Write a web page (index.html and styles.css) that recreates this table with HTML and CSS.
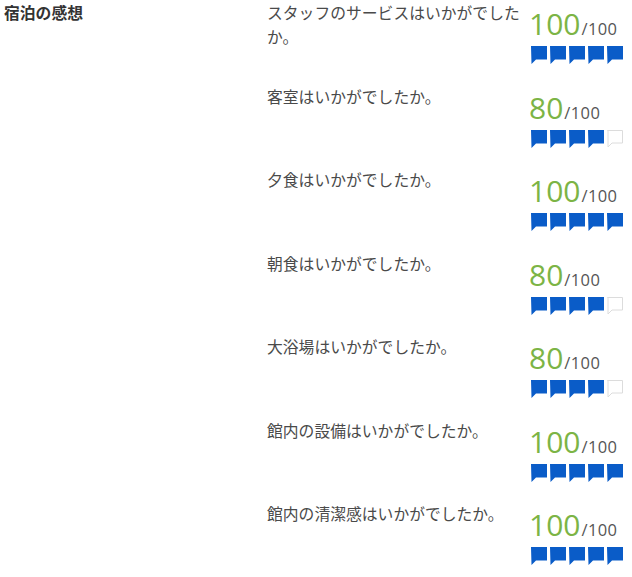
FILE: index.html
```html
<!DOCTYPE html>
<html lang="ja">
<head>
<meta charset="utf-8">
<link rel="stylesheet" href="styles.css">
</head>
<body>
<svg width="0" height="0" class="defs">
  <defs>
    <symbol id="bubble" viewBox="0 0 16 18">
      <path d="M0 0H16V13.5H5L0.5 18Z"/>
    </symbol>
    <symbol id="empty" viewBox="0 0 16 18">
      <path d="M0.5 0.5H15.5V13H5L1 17V0.5Z"/>
    </symbol>
  </defs>
</svg>
<section class="review">
  <h2 class="label">宿泊の感想</h2>
  <div class="rows">
    <div class="row">
      <p class="q">スタッフのサービスはいかがでしたか。</p>
      <div class="score">
        <div class="num"><span class="big">100</span><span class="max">/100</span></div>
        <div class="icons"><svg class="on"><use href="#bubble"/></svg><svg class="on"><use href="#bubble"/></svg><svg class="on"><use href="#bubble"/></svg><svg class="on"><use href="#bubble"/></svg><svg class="on"><use href="#bubble"/></svg></div>
      </div>
    </div>
    <div class="row">
      <p class="q">客室はいかがでしたか。</p>
      <div class="score">
        <div class="num"><span class="big">80</span><span class="max">/100</span></div>
        <div class="icons"><svg class="on"><use href="#bubble"/></svg><svg class="on"><use href="#bubble"/></svg><svg class="on"><use href="#bubble"/></svg><svg class="on"><use href="#bubble"/></svg><svg class="off"><use href="#empty"/></svg></div>
      </div>
    </div>
    <div class="row">
      <p class="q">夕食はいかがでしたか。</p>
      <div class="score">
        <div class="num"><span class="big">100</span><span class="max">/100</span></div>
        <div class="icons"><svg class="on"><use href="#bubble"/></svg><svg class="on"><use href="#bubble"/></svg><svg class="on"><use href="#bubble"/></svg><svg class="on"><use href="#bubble"/></svg><svg class="on"><use href="#bubble"/></svg></div>
      </div>
    </div>
    <div class="row">
      <p class="q">朝食はいかがでしたか。</p>
      <div class="score">
        <div class="num"><span class="big">80</span><span class="max">/100</span></div>
        <div class="icons"><svg class="on"><use href="#bubble"/></svg><svg class="on"><use href="#bubble"/></svg><svg class="on"><use href="#bubble"/></svg><svg class="on"><use href="#bubble"/></svg><svg class="off"><use href="#empty"/></svg></div>
      </div>
    </div>
    <div class="row">
      <p class="q">大浴場はいかがでしたか。</p>
      <div class="score">
        <div class="num"><span class="big">80</span><span class="max">/100</span></div>
        <div class="icons"><svg class="on"><use href="#bubble"/></svg><svg class="on"><use href="#bubble"/></svg><svg class="on"><use href="#bubble"/></svg><svg class="on"><use href="#bubble"/></svg><svg class="off"><use href="#empty"/></svg></div>
      </div>
    </div>
    <div class="row">
      <p class="q">館内の設備はいかがでしたか。</p>
      <div class="score">
        <div class="num"><span class="big">100</span><span class="max">/100</span></div>
        <div class="icons"><svg class="on"><use href="#bubble"/></svg><svg class="on"><use href="#bubble"/></svg><svg class="on"><use href="#bubble"/></svg><svg class="on"><use href="#bubble"/></svg><svg class="on"><use href="#bubble"/></svg></div>
      </div>
    </div>
    <div class="row">
      <p class="q">館内の清潔感はいかがでしたか。</p>
      <div class="score">
        <div class="num"><span class="big">100</span><span class="max">/100</span></div>
        <div class="icons"><svg class="on"><use href="#bubble"/></svg><svg class="on"><use href="#bubble"/></svg><svg class="on"><use href="#bubble"/></svg><svg class="on"><use href="#bubble"/></svg><svg class="on"><use href="#bubble"/></svg></div>
      </div>
    </div>
  </div>
</section>
</body>
</html>
```
FILE: styles.css
```css
html, body {
  margin: 0;
  padding: 0;
  background: #fff;
}
body {
  font-family: "Noto Sans CJK JP", "Noto Sans", sans-serif;
  color: #444;
}
.defs {
  position: absolute;
  width: 0;
  height: 0;
  overflow: hidden;
}
.review {
  display: flex;
  padding: 1px 0 0 4px;
}
.label {
  margin: 0;
  width: 263px;
  font-size: 15.8px;
  line-height: 24px;
  font-weight: bold;
  color: #333;
}
.rows {
  display: flex;
  flex-direction: column;
}
.row {
  display: flex;
  height: 83.5px;
}
.q {
  margin: 0;
  width: 260px;
  font-size: 15.8px;
  line-height: 24px;
  color: #4a4a4a;
}
.score {
  margin-left: 2px;
  padding-top: 6px;
}
.num {
  font-family: "Open Sans", "Liberation Sans", sans-serif;
  line-height: 34px;
  height: 34px;
  white-space: nowrap;
}
.big {
  font-size: 30px;
  color: #7cb445;
  margin-right: 1px;
}
.max {
  font-size: 16.5px;
  letter-spacing: 0.4px;
  color: #555;
}
.icons {
  display: flex;
  gap: 3px;
  margin-top: 5px;
  padding-left: 2px;
}
.icons svg {
  width: 16px;
  height: 18px;
}
.on {
  fill: #0a5cc8;
}
.off {
  fill: #fff;
  stroke: #dcdcdc;
  stroke-width: 1;
}
```
